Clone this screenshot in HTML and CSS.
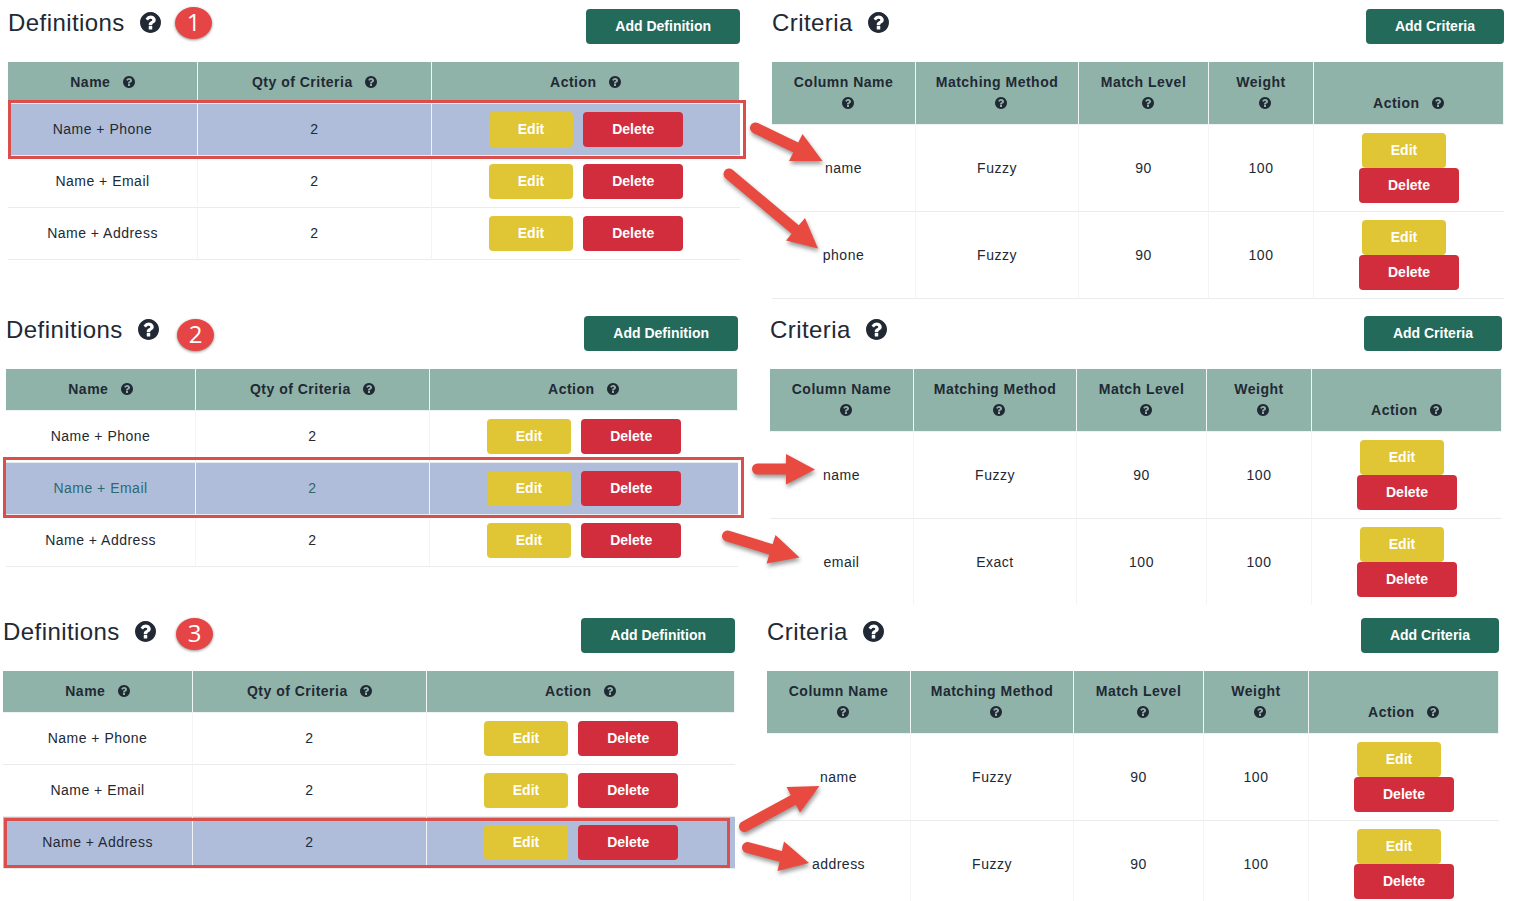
FILE: index.html
```html
<!DOCTYPE html>
<html lang="en">
  <head>
    <meta charset="utf-8">
    <title>Definitions and Criteria</title>
    <link rel="stylesheet" href="styles.css">
  </head>
  <body>
    <!-- shared help icon -->
    <svg class="sprite" aria-hidden="true">
      <symbol id="help" viewBox="128 128 1536 1536">
        <path d="M1024 1376v-192q0-14-9-23t-23-9h-192q-14 0-23 9t-9 23v192q0 14 9 23t23 9h192q14 0 23-9t9-23zM1280 704q0-88-55.500-163t-138.500-116-170-41q-243 0-371 213-15 24 8 42l132 100q7 6 19 6 16 0 25-12 53-68 86-92 34-24 86-24 48 0 85.500 26t37.500 59q0 38-20 61t-68 45q-63 28-115.500 86.500t-52.500 125.500v36q0 14 9 23t23 9h192q14 0 23-9t9-23q0-19 21.500-49.500t54.500-49.500q32-18 49-28.500t46-35 44.500-48 28-60.500 12.500-81zM1664 896q0 209-103 385.500t-279.500 279.500-385.500 103-385.500-103-279.500-279.500-103-385.500 103-385.500 279.500-279.500 385.500-103 385.500 103 279.500 279.500 103 385.500z"/>
      </symbol>
    </svg>

    <main>
      <section class="example example-1">
        <span class="badge">1</span>
        <div class="panel">
          <div class="panel-head">
            <h2>Definitions <svg class="help"><use href="#help"/></svg></h2>
            <button type="button" class="btn add">Add Definition</button>
          </div>
          <table class="definitions">
            <thead>
              <tr>
                <th>Name <svg class="help"><use href="#help"/></svg></th>
                <th>Qty of Criteria <svg class="help"><use href="#help"/></svg></th>
                <th>Action <svg class="help"><use href="#help"/></svg></th>
              </tr>
            </thead>
            <tbody>
              <tr class="selected">
                <td>Name + Phone</td>
                <td>2</td>
                <td><div class="actions"><button type="button" class="btn edit">Edit</button><button type="button" class="btn delete">Delete</button></div></td>
              </tr>
              <tr>
                <td>Name + Email</td>
                <td>2</td>
                <td><div class="actions"><button type="button" class="btn edit">Edit</button><button type="button" class="btn delete">Delete</button></div></td>
              </tr>
              <tr>
                <td>Name + Address</td>
                <td>2</td>
                <td><div class="actions"><button type="button" class="btn edit">Edit</button><button type="button" class="btn delete">Delete</button></div></td>
              </tr>
            </tbody>
          </table>
        </div>
        <div class="panel">
          <div class="panel-head">
            <h2>Criteria <svg class="help"><use href="#help"/></svg></h2>
            <button type="button" class="btn add">Add Criteria</button>
          </div>
          <table class="criteria">
            <thead>
              <tr>
                <th>Column Name <svg class="help"><use href="#help"/></svg></th>
                <th>Matching Method <svg class="help"><use href="#help"/></svg></th>
                <th>Match Level <svg class="help"><use href="#help"/></svg></th>
                <th>Weight <svg class="help"><use href="#help"/></svg></th>
                <th>Action <svg class="help"><use href="#help"/></svg></th>
              </tr>
            </thead>
            <tbody>
              <tr>
                <td>name</td>
                <td>Fuzzy</td>
                <td>90</td>
                <td>100</td>
                <td><div class="actions"><button type="button" class="btn edit">Edit</button><button type="button" class="btn delete">Delete</button></div></td>
              </tr>
              <tr>
                <td>phone</td>
                <td>Fuzzy</td>
                <td>90</td>
                <td>100</td>
                <td><div class="actions"><button type="button" class="btn edit">Edit</button><button type="button" class="btn delete">Delete</button></div></td>
              </tr>
            </tbody>
          </table>
        </div>
      </section>

      <section class="example example-2">
        <span class="badge">2</span>
        <div class="panel">
          <div class="panel-head">
            <h2>Definitions <svg class="help"><use href="#help"/></svg></h2>
            <button type="button" class="btn add">Add Definition</button>
          </div>
          <table class="definitions">
            <thead>
              <tr>
                <th>Name <svg class="help"><use href="#help"/></svg></th>
                <th>Qty of Criteria <svg class="help"><use href="#help"/></svg></th>
                <th>Action <svg class="help"><use href="#help"/></svg></th>
              </tr>
            </thead>
            <tbody>
              <tr>
                <td>Name + Phone</td>
                <td>2</td>
                <td><div class="actions"><button type="button" class="btn edit">Edit</button><button type="button" class="btn delete">Delete</button></div></td>
              </tr>
              <tr class="selected hover">
                <td>Name + Email</td>
                <td>2</td>
                <td><div class="actions"><button type="button" class="btn edit">Edit</button><button type="button" class="btn delete">Delete</button></div></td>
              </tr>
              <tr>
                <td>Name + Address</td>
                <td>2</td>
                <td><div class="actions"><button type="button" class="btn edit">Edit</button><button type="button" class="btn delete">Delete</button></div></td>
              </tr>
            </tbody>
          </table>
        </div>
        <div class="panel">
          <div class="panel-head">
            <h2>Criteria <svg class="help"><use href="#help"/></svg></h2>
            <button type="button" class="btn add">Add Criteria</button>
          </div>
          <table class="criteria open-end">
            <thead>
              <tr>
                <th>Column Name <svg class="help"><use href="#help"/></svg></th>
                <th>Matching Method <svg class="help"><use href="#help"/></svg></th>
                <th>Match Level <svg class="help"><use href="#help"/></svg></th>
                <th>Weight <svg class="help"><use href="#help"/></svg></th>
                <th>Action <svg class="help"><use href="#help"/></svg></th>
              </tr>
            </thead>
            <tbody>
              <tr>
                <td>name</td>
                <td>Fuzzy</td>
                <td>90</td>
                <td>100</td>
                <td><div class="actions"><button type="button" class="btn edit">Edit</button><button type="button" class="btn delete">Delete</button></div></td>
              </tr>
              <tr>
                <td>email</td>
                <td>Exact</td>
                <td>100</td>
                <td>100</td>
                <td><div class="actions"><button type="button" class="btn edit">Edit</button><button type="button" class="btn delete">Delete</button></div></td>
              </tr>
            </tbody>
          </table>
        </div>
      </section>

      <section class="example example-3">
        <span class="badge">3</span>
        <div class="panel">
          <div class="panel-head">
            <h2>Definitions <svg class="help"><use href="#help"/></svg></h2>
            <button type="button" class="btn add">Add Definition</button>
          </div>
          <table class="definitions">
            <thead>
              <tr>
                <th>Name <svg class="help"><use href="#help"/></svg></th>
                <th>Qty of Criteria <svg class="help"><use href="#help"/></svg></th>
                <th>Action <svg class="help"><use href="#help"/></svg></th>
              </tr>
            </thead>
            <tbody>
              <tr>
                <td>Name + Phone</td>
                <td>2</td>
                <td><div class="actions"><button type="button" class="btn edit">Edit</button><button type="button" class="btn delete">Delete</button></div></td>
              </tr>
              <tr>
                <td>Name + Email</td>
                <td>2</td>
                <td><div class="actions"><button type="button" class="btn edit">Edit</button><button type="button" class="btn delete">Delete</button></div></td>
              </tr>
              <tr class="selected">
                <td>Name + Address</td>
                <td>2</td>
                <td><div class="actions"><button type="button" class="btn edit">Edit</button><button type="button" class="btn delete">Delete</button></div></td>
              </tr>
            </tbody>
          </table>
        </div>
        <div class="panel">
          <div class="panel-head">
            <h2>Criteria <svg class="help"><use href="#help"/></svg></h2>
            <button type="button" class="btn add">Add Criteria</button>
          </div>
          <table class="criteria open-end">
            <thead>
              <tr>
                <th>Column Name <svg class="help"><use href="#help"/></svg></th>
                <th>Matching Method <svg class="help"><use href="#help"/></svg></th>
                <th>Match Level <svg class="help"><use href="#help"/></svg></th>
                <th>Weight <svg class="help"><use href="#help"/></svg></th>
                <th>Action <svg class="help"><use href="#help"/></svg></th>
              </tr>
            </thead>
            <tbody>
              <tr>
                <td>name</td>
                <td>Fuzzy</td>
                <td>90</td>
                <td>100</td>
                <td><div class="actions"><button type="button" class="btn edit">Edit</button><button type="button" class="btn delete">Delete</button></div></td>
              </tr>
              <tr>
                <td>address</td>
                <td>Fuzzy</td>
                <td>90</td>
                <td>100</td>
                <td><div class="actions"><button type="button" class="btn edit">Edit</button><button type="button" class="btn delete">Delete</button></div></td>
              </tr>
            </tbody>
          </table>
        </div>
      </section>

      <!-- frames round the selected rows, arrows to their criteria -->
      <svg class="marks" aria-hidden="true">
        <g class="frames">
          <rect x="9.5" y="101.5" width="735" height="56"/>
          <rect x="4.5" y="458.5" width="738" height="58"/>
          <rect x="5.5" y="819.5" width="723" height="47"/>
        </g>
        <g class="arrows">
          <path class="shaft" d="M755.500 128L798 148.500"/>
          <path d="M822.500 161L802.500 134L789 161z"/>
          <path class="shaft" d="M729 174L797 231"/>
          <path d="M818 248.500L805 218L786 240.500z"/>
          <path class="shaft" d="M757.500 469H788"/>
          <path d="M815 469.500L786 454V484.500z"/>
          <path class="shaft" d="M727.500 536L773 550"/>
          <path d="M799.500 557.500L775.500 535L766.500 563.500z"/>
          <path class="shaft" d="M744.500 826.500L795 799"/>
          <path d="M819.500 786L786.500 787L800 812.500z"/>
          <path class="shaft" d="M747.500 847.500L783 857"/>
          <path d="M809 863L784 841.500L777.500 871z"/>
        </g>
      </svg>
    </main>
  </body>
</html>
```

FILE: styles.css
```css
* {
  box-sizing: border-box;
}

body {
  margin: 0;
  background: #fff;
  color: #212934;
  font-family: "Liberation Sans", Arial, sans-serif;
  font-size: 14px;
  line-height: 21px;
  letter-spacing: 0.035em;
}

main {
  position: relative;
}

.sprite {
  position: absolute;
  width: 0;
  height: 0;
}

.example {
  position: relative;
  display: grid;
  grid-template-columns: 1fr 1fr;
  gap: 32px;
}

.example-1 {
  padding: 9px 9px 8px 8px;
}

.example-2 {
  padding: 9px 11px 4px 6px;
}

.example-3 {
  padding: 9px 14px 0 3px;
}

.panel-head {
  display: flex;
  justify-content: space-between;
  align-items: flex-start;
  margin-bottom: 18px;
}

h2 {
  margin: 0;
  font-size: 24px;
  font-weight: normal;
  line-height: 28px;
  letter-spacing: 0.018em;
}

.help {
  width: 12px;
  height: 12px;
  margin-left: 8px;
  vertical-align: -1px;
  fill: currentColor;
}

h2 .help {
  width: 21px;
  height: 21px;
  vertical-align: -2px;
}

.btn {
  height: 35px;
  padding: 0 29px 2px;
  border: 0;
  border-radius: 4px;
  color: #fff;
  font-family: inherit;
  font-size: 14px;
  font-weight: bold;
  cursor: pointer;
}

.add {
  background: #236a5b;
}

.edit {
  margin-right: 10px;
  background: #e0c534;
}

.delete {
  background: #d22d3d;
}

table {
  width: 100%;
  table-layout: fixed;
  border-collapse: separate;
  border-spacing: 0;
  text-align: center;
}

th {
  padding: 10px 16px;
  background: #90b3a9;
  background-clip: padding-box;
  border-right: 1px solid #f1f5f4;
  border-bottom: 1px solid #eef2f2;
  vertical-align: bottom;
}

td {
  padding: 8px 16px;
  border-right: 1px solid #f3f5f5;
  border-bottom: 1px solid #e8ecec;
}

td:last-child {
  border-right: 0;
}

.definitions th:nth-child(1) {
  width: 190px;
}

.definitions th:nth-child(2) {
  width: 234px;
}

.criteria th:nth-child(1) {
  width: 144px;
}

.criteria th:nth-child(2) {
  width: 163px;
}

.criteria th:nth-child(3) {
  width: 130px;
}

.criteria th:nth-child(4) {
  width: 105px;
}

.open-end tr:last-child td {
  border-bottom: 0;
}

.selected td {
  background: #b0bdda;
  background-clip: padding-box;
}

.hover td {
  color: #2b6a6e;
}

.actions {
  display: flex;
  flex-wrap: wrap;
  justify-content: center;
}

.badge {
  position: absolute;
  top: 7px;
  left: 175px;
  width: 37px;
  height: 32px;
  border-radius: 50%;
  background: #e64545;
  box-shadow: 0 1px 3px rgba(0, 0, 0, 0.45);
  color: #fff;
  font-family: "Open Sans", sans-serif;
  font-size: 24px;
  line-height: 29px;
  letter-spacing: normal;
  text-align: center;
}

.example-2 .badge {
  top: 12px;
  left: 177px;
}

.example-3 .badge {
  top: 9px;
  left: 176px;
}

.marks {
  position: absolute;
  top: 0;
  left: 0;
  width: 100%;
  height: 100%;
  pointer-events: none;
}

.frames {
  fill: none;
  stroke: #da4f4b;
  stroke-width: 3px;
}

.arrows {
  fill: #e84a40;
  filter: drop-shadow(1px 3px 2px rgba(0, 0, 0, 0.4));
}

.shaft {
  stroke: #e84a40;
  stroke-width: 11px;
  stroke-linecap: round;
}
```
